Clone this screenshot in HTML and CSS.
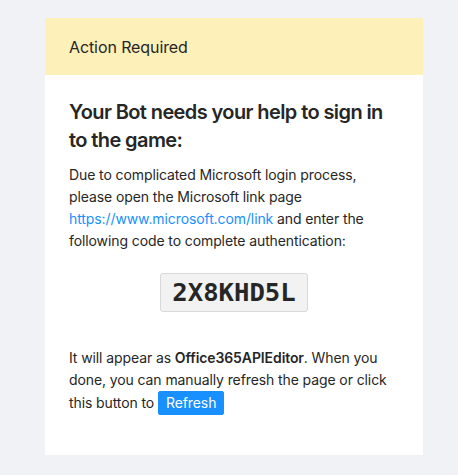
FILE: index.html
```html
<!DOCTYPE html>
<html>
<head>
<meta charset="utf-8">
<link rel="stylesheet" href="styles.css">
</head>
<body>
<div class="card">
  <div class="card-head">Action Required</div>
  <div class="card-body">
    <h2 class="title">Your Bot needs your help to sign in to the game:</h2>
    <p class="text">Due to complicated Microsoft login process, please open the Microsoft link page <a class="link" href="#">https://www.microsoft.com/link</a> and enter the following code to complete authentication:</p>
    <div class="code-wrap"><code class="code">2X8KHD5L</code></div>
    <p class="text">It will appear as <b>Office365APIEditor</b>. When you done, you can manually refresh the page or click this button to <button class="btn">Refresh</button></p>
  </div>
</div>
</body>
</html>
```
FILE: styles.css
```css
html, body {
  margin: 0;
  padding: 0;
}
body {
  background: #f0f2f5;
  font-family: Inter, "Noto Sans", sans-serif;
  color: #262626;
  font-size: 14px;
  line-height: 22px;
}
.card {
  width: 378px;
  margin: 18px 0 20px 45px;
  background: #fff;
}
.card-head {
  height: 57px;
  display: flex;
  align-items: center;
  padding: 0 24px;
  background: #fdf1b9;
  font-size: 16px;
  letter-spacing: -0.1px;
  color: #262626;
}
.card-body {
  padding: 23px 24px 40px 24px;
}
.title {
  margin: 0 0 10px 0;
  font-size: 20px;
  line-height: 28px;
  font-weight: 600;
  letter-spacing: -0.6px;
  color: #262626;
}
.text {
  margin: 0;
  letter-spacing: -0.1px;
}
.link {
  color: #1890ff;
  text-decoration: none;
}
.code-wrap {
  display: flex;
  justify-content: center;
  margin: 21px 0 35px 0;
}
.code {
  font-family: "DejaVu Sans Mono", monospace;
  font-weight: bold;
  font-size: 25.6px;
  line-height: 31px;
  padding: 3px 11px;
  background: #f2f2f2;
  border: 1px solid #d9d9d9;
  border-radius: 3px;
  color: #262626;
  letter-spacing: 0;
}
.text b {
  font-weight: 600;
}
.btn {
  font-family: Inter, "Noto Sans", sans-serif;
  font-size: 14px;
  letter-spacing: -0.1px;
  height: 24px;
  line-height: 22px;
  padding: 0 7px;
  border: 1px solid #1890ff;
  background: #1890ff;
  color: #fff;
  border-radius: 2px;
  vertical-align: baseline;
}
```
